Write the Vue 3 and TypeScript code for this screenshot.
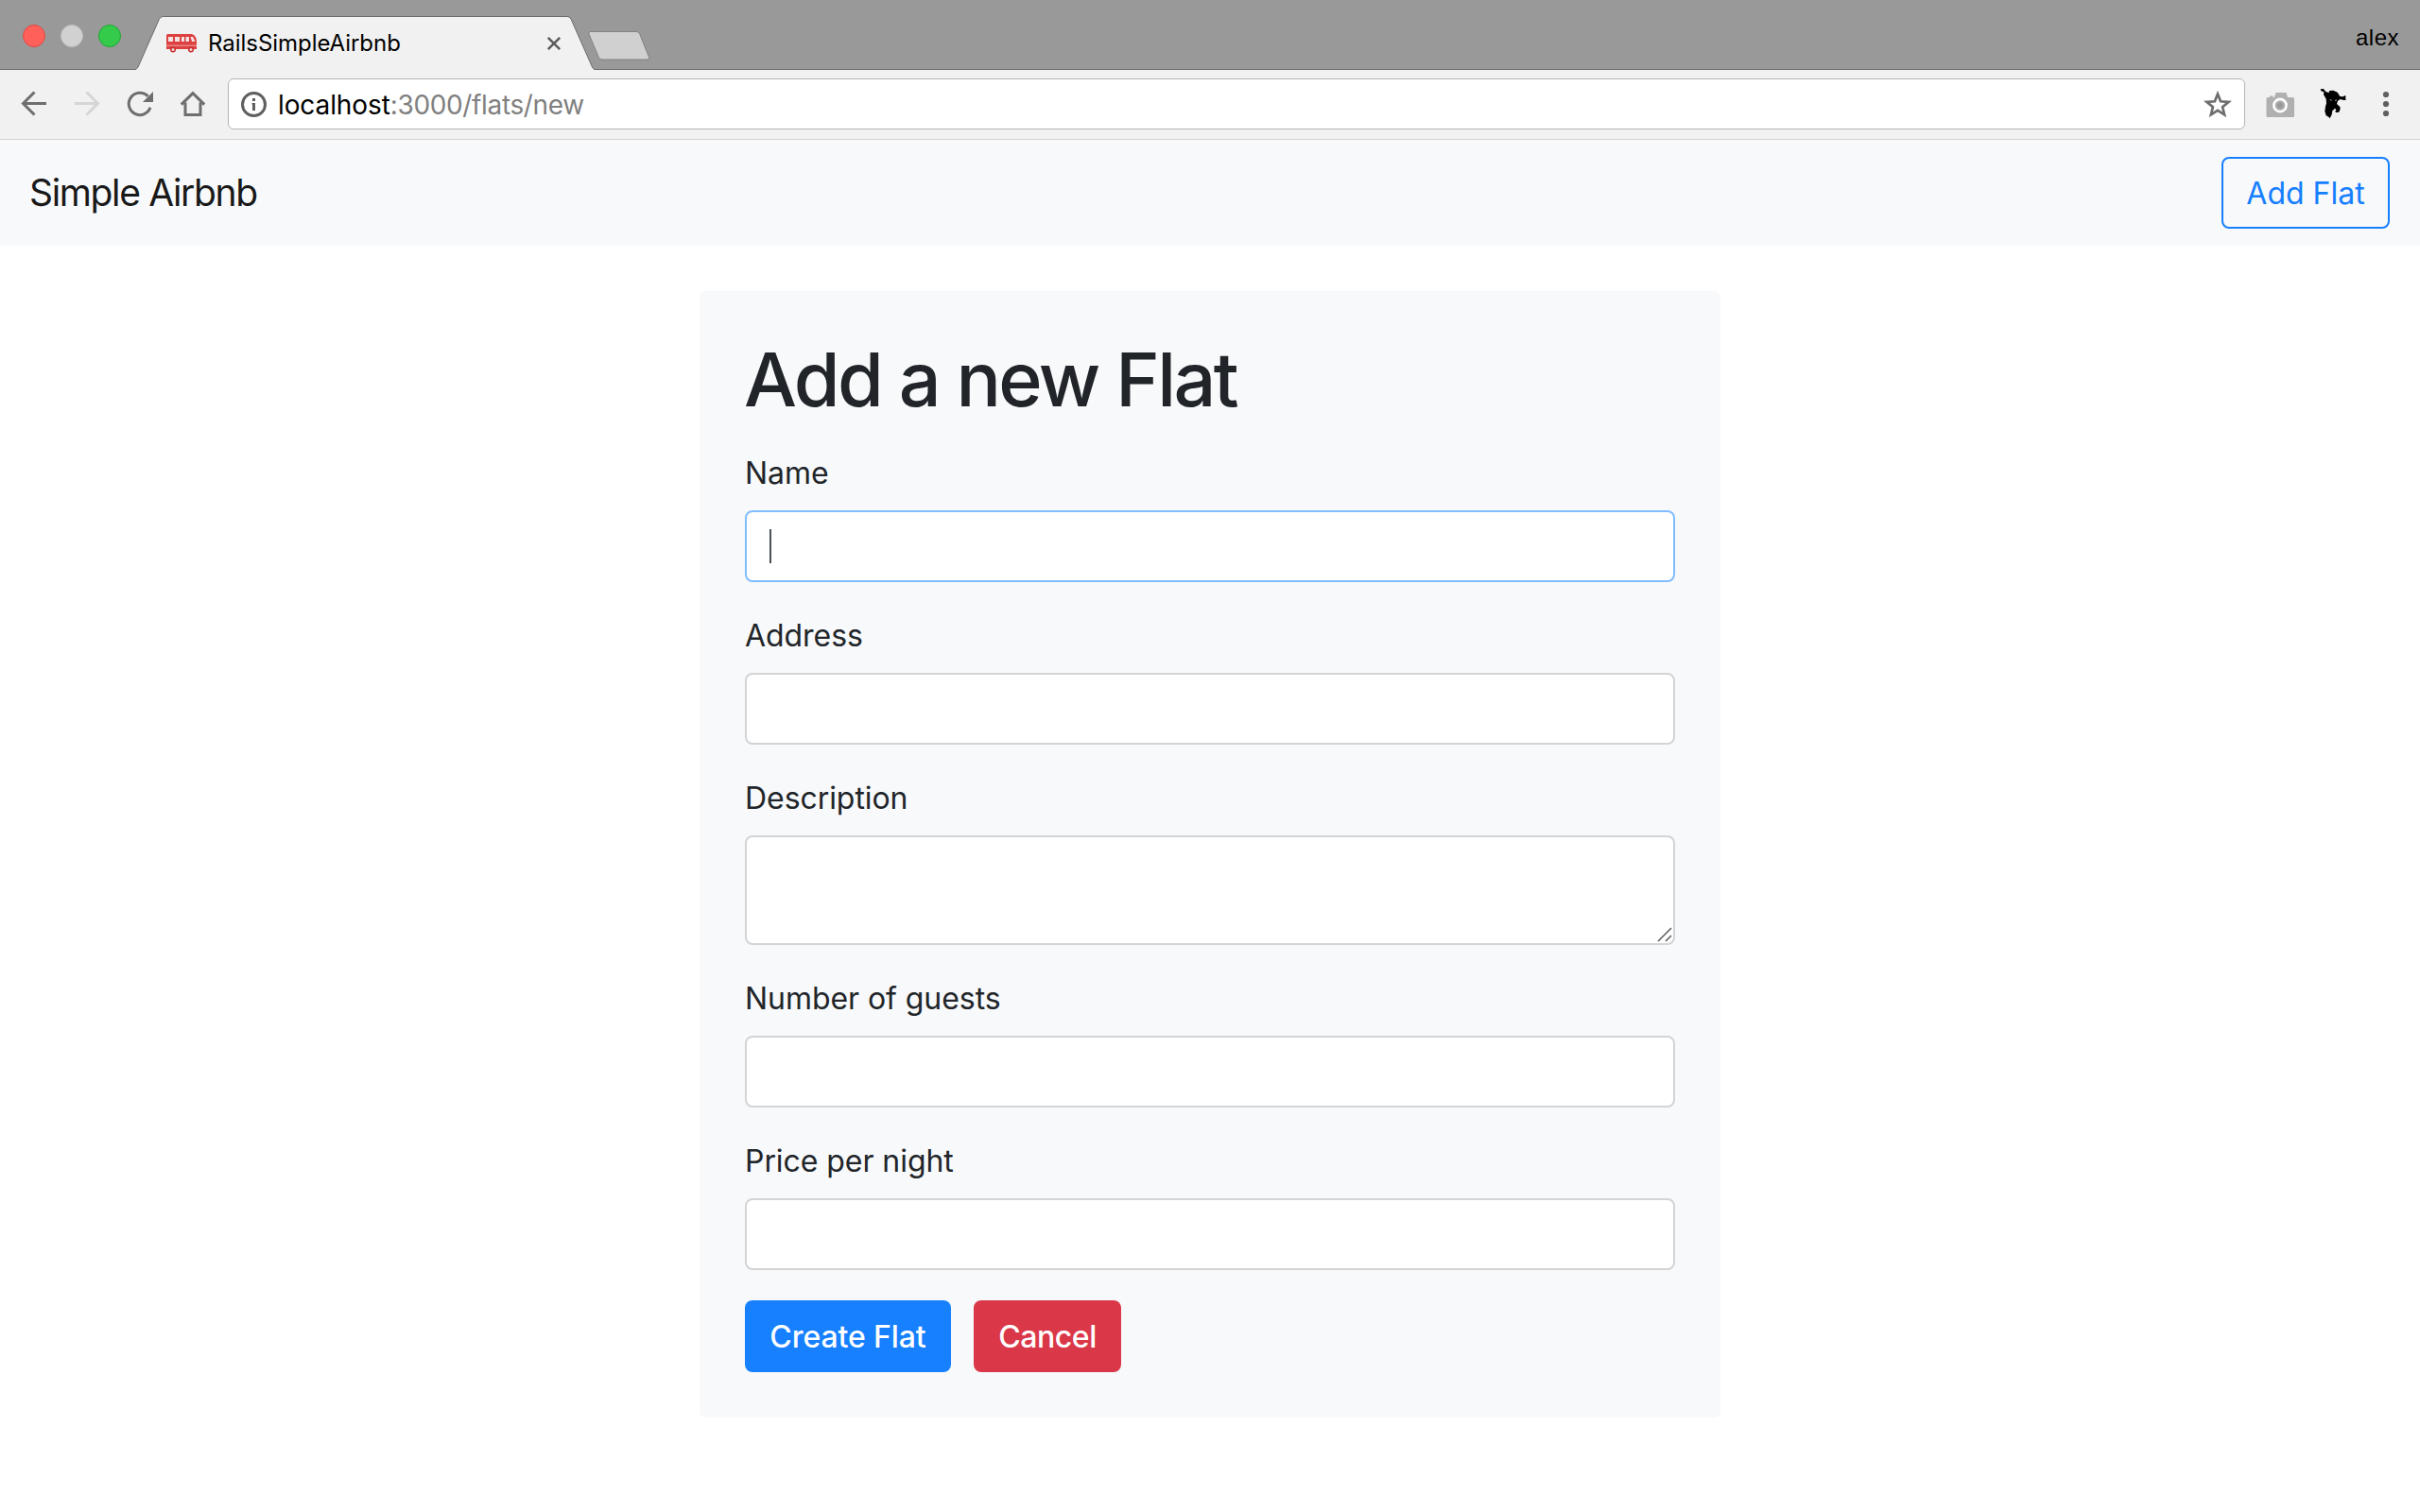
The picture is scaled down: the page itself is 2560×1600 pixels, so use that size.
<script setup lang="ts">
interface Field {
  id: string
  label: string
  kind: 'focused' | 'text' | 'area'
}

const fields: Field[] = [
  { id: 'name', label: 'Name', kind: 'focused' },
  { id: 'address', label: 'Address', kind: 'text' },
  { id: 'description', label: 'Description', kind: 'area' },
  { id: 'guests', label: 'Number of guests', kind: 'text' },
  { id: 'price', label: 'Price per night', kind: 'text' },
]
</script>

<template>
  <div class="window">
    <header class="tabstrip">
      <div class="lights">
        <i class="light red"></i>
        <i class="light grey"></i>
        <i class="light green"></i>
      </div>
      <div class="tab">
        <svg class="tab-shape" width="486" height="58" viewBox="0 0 486 58">
          <path d="M0 58V57.500Q2 57 3 55L25.500 4Q27 1.500 29.500 1.500H457Q459.500 1.500 461 4L483.500 55Q484.500 57 486 57.500V58Z" fill="#f1f1f1" />
          <path d="M0 57.500Q2 57 3 55L25.500 4Q27 1.500 29.500 1.500H457Q459.500 1.500 461 4L483.500 55Q484.500 57 486 57.500" fill="none" stroke="#6b6b6b" />
        </svg>
        <svg class="bus" width="32" height="20" viewBox="0 0 32 20">
          <path d="M1.500 0H27Q32 2 32 8V16H0V1.500Q0 0 1.500 0Z" fill="#dd4140" />
          <path d="M0 11.500H32V13H0Z" fill="#e98583" />
          <path d="M2 3H7V8H2ZM9 3H14V8H9ZM16 3H19V8H16ZM20.500 3H24V8H20.500ZM25.500 3H28L30.500 8H27Z" fill="#f4e3e3" />
          <circle cx="7" cy="16.500" r="3" fill="#c92f2f" /><circle cx="7" cy="16.500" r="1.500" fill="#f3dcdc" />
          <circle cx="26" cy="16.500" r="3" fill="#c92f2f" /><circle cx="26" cy="16.500" r="1.500" fill="#f3dcdc" />
        </svg>
        <span class="tab-title">RailsSimpleAirbnb</span>
        <svg class="close" width="16" height="16" viewBox="0 0 16 16">
          <path d="M1.800 1.800L14.200 14.200M14.200 1.800L1.800 14.200" stroke="#5a5a5a" stroke-width="2.500" fill="none" />
        </svg>
      </div>
      <svg class="newtab" width="66" height="33" viewBox="0 0 66 33">
        <path d="M2.500 1.500H51Q53.500 1.500 54.500 3.500L64.500 28.500Q65.200 31 63 31H15Q12.500 31 11.500 29L1 4Q.3 1.500 2.500 1.500Z" fill="#d0d0d0" stroke="#828282" />
      </svg>
      <span class="profile">alex</span>
    </header>

    <div class="toolbar">
      <div class="nav-icons">
        <svg class="icon" viewBox="0 0 32 32"><path d="M29 15.500H5M16.500 3.500L4.500 15.500L16.500 27.500" fill="none" stroke="#6e6e6e" stroke-width="3" /></svg>
        <svg class="icon" viewBox="0 0 32 32"><path d="M3 15.500H27M15.500 3.500L27.500 15.500L15.500 27.500" fill="none" stroke="#d6d6d6" stroke-width="3" /></svg>
        <svg class="icon" viewBox="0 0 32 32">
          <path d="M27 19.800A11.700 11.700 0 1 1 24.500 7.900" fill="none" stroke="#6e6e6e" stroke-width="3" />
          <path d="M30 3V14H19Z" fill="#6e6e6e" />
        </svg>
        <svg class="icon" viewBox="0 0 32 32"><path d="M3.800 16.600L16 4.600L28.200 16.600M8 14.500V27.500H24V14.500" fill="none" stroke="#6e6e6e" stroke-width="3" /></svg>
      </div>
      <div class="omnibox">
        <svg class="icon" viewBox="0 0 32 32">
          <circle cx="16.500" cy="16.500" r="12" fill="none" stroke="#5f5f5f" stroke-width="3" />
          <path d="M15 10H18V13H15ZM14.500 15H18V23H15V16.500H14.500Z" fill="#5f5f5f" />
        </svg>
        <span class="url"><span class="host">localhost</span><span class="path">:3000/flats/new</span></span>
        <svg class="icon" viewBox="0 0 32 32"><path d="M16 5.500L19.100 13.300L27.600 13.900L21.100 19.300L23.100 27.300L16 22.900L8.900 27.300L10.900 19.300L4.400 13.900L12.900 13.300Z" fill="none" stroke="#6e6e6e" stroke-width="2.700" /></svg>
      </div>
      <div class="ext-icons">
        <svg class="icon" viewBox="0 0 32 32">
          <path d="M3 9H5V7.500H8.500V9H10L11.500 4H22.500L24 9H29.500Q31 9 31 10.500V28.500Q31 30 29.500 30H3Q1.500 30 1.500 28.500V10.500Q1.500 9 3 9Z" fill="#b0b0b0" />
          <circle cx="16" cy="17.500" r="6.600" fill="#adadad" stroke="#fff" stroke-width="2.600" />
          <circle cx="16" cy="17.500" r="2.900" fill="#999" />
        </svg>
        <svg class="icon" viewBox="0 0 32 32">
          <g transform="translate(-62 -14) scale(.33333)">
            <path d="M194 43L204 42L210 50L221 55L222 48L235 47L248 53L256 66L266 67L272 63L275 67L273 72L276 77L268 78L257 75L249 80L246 90L256 99L257 106L253 116L243 117L241 112L245 109L240 104L232 112L230 124L224 136L220 131L212 127L208 113L210 98L213 88L212 74L204 60L205 52L196 49Z" fill="#000" />
            <path d="M223 75.500L230 77L230 79.500L225 78.500ZM240 78L246 76.500L245 79.500L240 80.500Z" fill="#ccc" />
          </g>
        </svg>
        <svg class="icon" viewBox="0 0 32 32"><g fill="#5f5f5f"><circle cx="16" cy="6" r="3.100" /><circle cx="16" cy="16" r="3.100" /><circle cx="16" cy="26" r="3.100" /></g></svg>
      </div>
    </div>

    <nav class="navbar">
      <a class="brand">Simple Airbnb</a>
      <a class="btn outline">Add Flat</a>
    </nav>

    <main class="card">
      <h1>Add a new Flat</h1>
      <div v-for="f in fields" :key="f.id" class="group">
        <label :for="f.id">{{ f.label }}</label>
        <div v-if="f.kind === 'focused'" class="control focused"><i class="caret"></i></div>
        <div v-else-if="f.kind === 'area'" class="area">
          <textarea :id="f.id" class="control"></textarea>
          <svg class="grip" width="18" height="18" viewBox="0 0 18 18"><path d="M2 16L16 2M10 16L16 10" stroke="#5a5a5a" stroke-width="1.500" fill="none" /></svg>
        </div>
        <input v-else :id="f.id" class="control" type="text" />
      </div>
      <div class="actions">
        <button class="btn primary">Create Flat</button>
        <button class="btn danger">Cancel</button>
      </div>
    </main>
  </div>
</template>

<style>
body {
  background: #fff;
}
</style>

<style scoped>
* {
  box-sizing: border-box;
}
.window {
  width: 2560px;
  height: 1600px;
  overflow: hidden;
  background: #fff;
  font-family: Inter, "Liberation Sans", sans-serif;
  color: #212529;
}
.tabstrip {
  height: 74px;
  display: flex;
  align-items: flex-start;
  background: #999;
  border-bottom: 1px solid #6b6b6b;
}
.lights {
  display: flex;
  gap: 16px;
  padding: 26px 0 0 24px;
  width: 143px;
}
.light {
  width: 24px;
  height: 24px;
  border-radius: 50%;
  border: 1px solid;
}
.red {
  background: #ff6059;
  border-color: #dd4a45;
}
.grey {
  background: #d1d1d1;
  border-color: #bdbdbd;
}
.green {
  background: #34cb4a;
  border-color: #22a535;
}
.tab {
  position: relative;
  width: 486px;
  height: 58px;
  margin-top: 16px;
  display: flex;
  align-items: flex-start;
}
.tab-shape {
  position: absolute;
  left: 0;
  top: 0;
}
.bus {
  position: relative;
  margin: 20px 0 0 33px;
}
.tab-title {
  position: relative;
  flex: 1;
  margin: 14px 0 0 12px;
  font-size: 24px;
  line-height: 32px;
  letter-spacing: -0.04px;
  color: #000;
  white-space: nowrap;
}
.close {
  position: relative;
  margin: 22px 35px 0 0;
}
.newtab {
  margin: 32px 0 0 -7px;
}
.profile {
  margin: 24px 22px 0 auto;
  font-family: "Liberation Sans", sans-serif;
  font-size: 24px;
  line-height: 32px;
  letter-spacing: 0.5px;
  color: #000;
}
.toolbar {
  height: 74px;
  display: flex;
  align-items: center;
  padding: 0 20px 1px;
  background: #f1f1f1;
  border-bottom: 1px solid #d2d2d2;
}
.nav-icons,
.ext-icons {
  display: flex;
  gap: 24px;
}
.icon {
  display: block;
  width: 32px;
  height: 32px;
  flex: none;
}
.omnibox {
  flex: 1;
  height: 54px;
  margin: 0 21px;
  padding: 0 12px 0 10px;
  display: flex;
  align-items: center;
  background: #fff;
  border: 1px solid #b4b4b4;
  border-radius: 6px;
}
.url {
  flex: 1;
  margin-left: 10px;
  padding-top: 2px;
  font-size: 28px;
  line-height: 40px;
}
.host {
  color: #000;
  letter-spacing: -0.1px;
}
.path {
  color: #808080;
  letter-spacing: -0.35px;
}
.navbar {
  height: 112px;
  display: flex;
  align-items: center;
  justify-content: space-between;
  padding: 0 32px 0 31px;
  background: #f8f9fb;
}
.brand {
  font-size: 39px;
  line-height: 60px;
  letter-spacing: -1.35px;
  color: #191919;
}
.btn {
  height: 76px;
  padding: 2px 0 0;
  border: 2px solid transparent;
  border-radius: 8px;
  font-family: inherit;
  font-size: 32px;
  line-height: 48px;
  display: flex;
  align-items: center;
  justify-content: center;
  white-space: nowrap;
}
.outline {
  width: 178px;
  border-color: #1680ff;
  color: #1680ff;
}
.primary {
  width: 218px;
  background: #1680ff;
  color: #fff;
  font-weight: 450;
  letter-spacing: -0.1px;
}
.danger {
  width: 156px;
  background: #da3849;
  color: #fff;
  font-weight: 450;
  letter-spacing: -0.45px;
}
.card {
  width: 1080px;
  margin: 48px auto 0;
  padding: 48px;
  background: #f8f9fb;
  border-radius: 6px;
}
h1 {
  margin: 0 0 31px -1px;
  padding-top: 1px;
  font-size: 79px;
  line-height: 88px;
  font-weight: 500;
  letter-spacing: -2.6px;
}
.group {
  margin-bottom: 32px;
}
label {
  display: block;
  margin-bottom: 15px;
  padding-top: 1px;
  font-size: 32px;
  line-height: 48px;
  letter-spacing: -0.06px;
}
.control {
  display: block;
  width: 100%;
  height: 76px;
  padding: 0 24px;
  background: #fff;
  border: 2px solid #d3d4d6;
  border-radius: 8px;
  outline: none;
}
.focused {
  display: flex;
  align-items: center;
  border-color: #80bdff;
}
.caret {
  width: 2px;
  height: 36px;
  background: #495057;
}
.area {
  position: relative;
}
.area .control {
  height: 116px;
  resize: none;
}
.grip {
  position: absolute;
  right: 2px;
  bottom: 2px;
}
.actions {
  display: flex;
  gap: 24px;
}
</style>
